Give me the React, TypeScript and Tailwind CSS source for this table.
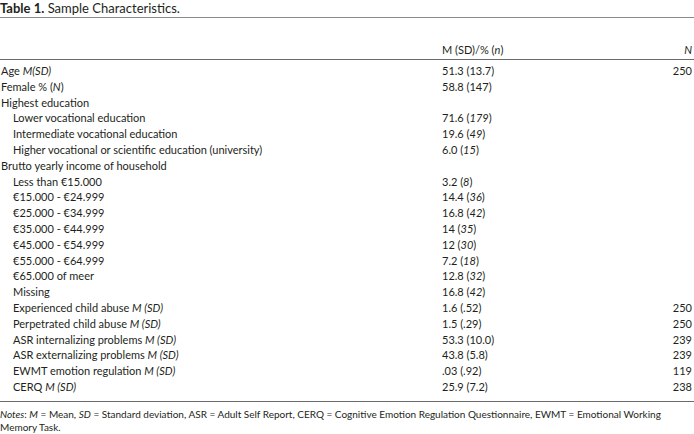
import React from "react";

type Row = { label: React.ReactNode; value?: React.ReactNode; n?: string; indent?: boolean };

const I = ({ children }: { children: React.ReactNode }) => <i>{children}</i>;

const rows: Row[] = [
  { label: <>Age <I>M(SD)</I></>, value: "51.3 (13.7)", n: "250" },
  { label: <>Female % (<I>N</I>)</>, value: "58.8 (147)" },
  { label: "Highest education" },
  { label: "Lower vocational education", value: <>71.6 (<I>179</I>)</>, indent: true },
  { label: "Intermediate vocational education", value: <>19.6 (<I>49</I>)</>, indent: true },
  { label: "Higher vocational or scientific education (university)", value: <>6.0 (<I>15</I>)</>, indent: true },
  { label: "Brutto yearly income of household" },
  { label: "Less than €15.000", value: <>3.2 (<I>8</I>)</>, indent: true },
  { label: "€15.000 - €24.999", value: <>14.4 (<I>36</I>)</>, indent: true },
  { label: "€25.000 - €34.999", value: <>16.8 (<I>42</I>)</>, indent: true },
  { label: "€35.000 - €44.999", value: <>14 (<I>35</I>)</>, indent: true },
  { label: "€45.000 - €54.999", value: <>12 (<I>30</I>)</>, indent: true },
  { label: "€55.000 - €64.999", value: <>7.2 (<I>18</I>)</>, indent: true },
  { label: "€65.000 of meer", value: <>12.8 (<I>32</I>)</>, indent: true },
  { label: "Missing", value: <>16.8 (<I>42</I>)</>, indent: true },
  { label: <>Experienced child abuse <I>M (SD)</I></>, value: "1.6 (.52)", n: "250", indent: true },
  { label: <>Perpetrated child abuse <I>M (SD)</I></>, value: "1.5 (.29)", n: "250", indent: true },
  { label: <>ASR internalizing problems <I>M (SD)</I></>, value: "53.3 (10.0)", n: "239", indent: true },
  { label: <>ASR externalizing problems <I>M (SD)</I></>, value: "43.8 (5.8)", n: "239", indent: true },
  { label: <>EWMT emotion regulation <I>M (SD)</I></>, value: ".03 (.92)", n: "119", indent: true },
  { label: <>CERQ <I>M (SD)</I></>, value: "25.9 (7.2)", n: "238", indent: true },
];

export default function App() {
  return (
    <div
      className="w-[694px] h-[434px] bg-white text-[#231f20] overflow-hidden"
      style={{ fontFamily: "Lato, 'Open Sans', sans-serif" }}
    >
      <div className="text-[13px] leading-[16px] h-[16px]">
        <span className="font-bold">Table 1.</span> Sample Characteristics.
      </div>
      <div className="h-[1px] bg-[#8a8a8a] mt-[1px]" />
      <div className="grid grid-cols-[442px_1fr_auto] text-[11px] leading-[16px] pt-[24px] pb-[1px] pr-[2px]">
        <div />
        <div>
          M (SD)/% (<I>n</I>)
        </div>
        <div className="text-right">
          <I>N</I>
        </div>
      </div>
      <div className="h-[1px] bg-[#6a6a6a]" />
      <div className="grid grid-cols-[442px_1fr_auto] text-[11px] leading-[15.8px] pt-[3px] pb-[6px] pr-[2px]">
        {rows.map((r, i) => (
          <React.Fragment key={i}>
            <div className={r.indent ? "pl-[13px]" : "pl-[1px]"}>{r.label}</div>
            <div>{r.value ?? ""}</div>
            <div className="text-right">{r.n ?? ""}</div>
          </React.Fragment>
        ))}
      </div>
      <div className="h-[1px] bg-[#6a6a6a]" />
      <div className="text-[10px] leading-[13px] pt-[6px] pr-[2px]">
        <I>Notes</I>: <I>M</I> = Mean, <I>SD</I> = Standard deviation, ASR = Adult Self Report, CERQ = Cognitive
        Emotion Regulation Questionnaire, EWMT = Emotional Working Memory Task.
      </div>
    </div>
  );
}
